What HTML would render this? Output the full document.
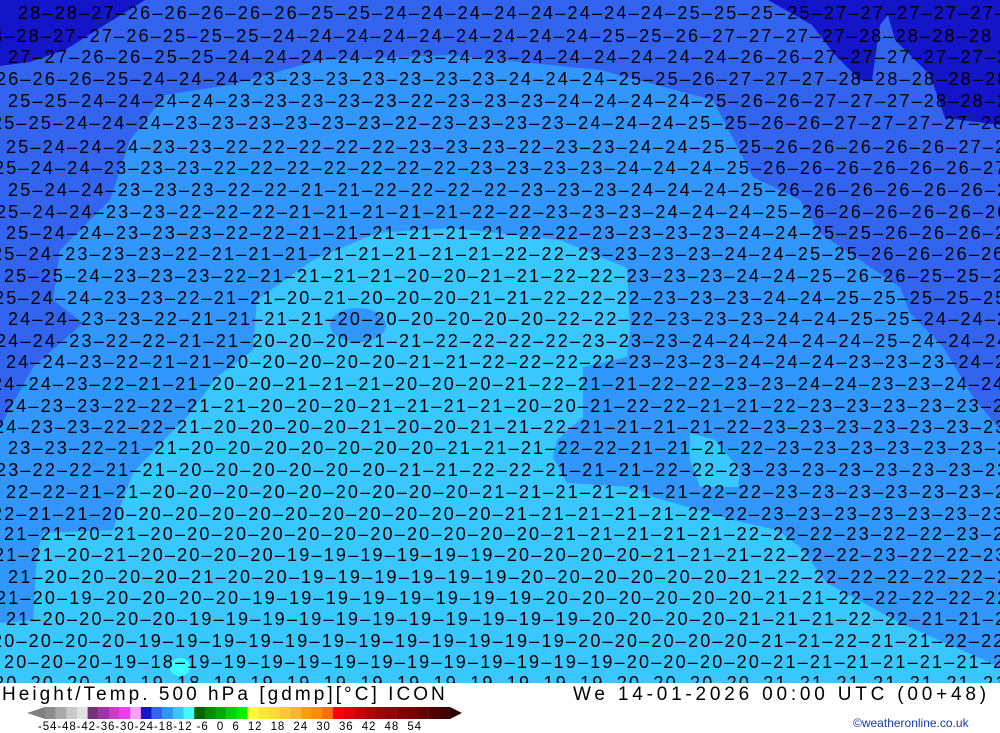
<!DOCTYPE html>
<html><head><meta charset="utf-8"><style>
html,body{margin:0;padding:0;background:#fff;}
#wrap{position:relative;width:1000px;height:733px;overflow:hidden;background:#fff;font-family:"Liberation Sans",sans-serif;}
#map{position:absolute;left:0;top:0;width:1000px;height:683px;overflow:hidden;}
.r{position:absolute;white-space:pre;font-size:18px;letter-spacing:2.2px;color:#000;line-height:18px;}
.t{position:absolute;white-space:pre;font-size:19px;color:#000;}
</style></head><body><div id="wrap">
<div id="map">
<svg width="1000" height="683" style="position:absolute;left:0;top:0">
<rect width="1000" height="683" fill="#3264f0"/>
<polygon fill="#1414c8" points="0,0 145,0 100,28 65,50 30,62 0,66"/>
<polygon fill="#1414c8" points="768,0 1000,0 1000,125 945,118 930,75 895,40 888,15 880,25 872,80 860,80 835,55 812,25"/>
<polygon fill="#3296ff" points="0,427 33,367 83,323 53,300 60,250 110,200 130,140 165,95 230,85 320,60 450,55 600,70 713,100 753,177 800,200 820,233 860,260 900,287 910,313 943,347 973,397 1000,430 1000,683 0,683"/>
<polygon fill="#38c8ff" points="0,623 33,620 37,553 43,533 113,530 120,507 133,473 157,447 187,417 217,377 253,350 257,300 313,260 377,233 450,228 560,240 627,268 630,330 627,357 583,367 583,417 557,440 553,457 567,483 633,487 653,497 733,520 777,530 800,547 827,583 900,623 1000,667 1000,683 0,683"/>
<polygon fill="#38c8ff" points="690,433 715,440 740,470 738,487 700,487 690,460"/>
<ellipse cx="358" cy="325" rx="28" ry="17" fill="#3296ff"/>
<ellipse cx="180" cy="667" rx="10" ry="9" fill="#3cffff"/>
</svg>
<div class="r" style="left:18px;top:4px">28–28–27–26–26–26–26–26–25–25–24–24–24–24–24–24–24–24–25–25–25–25–27–27–27–27–27–28–28</div>
<div class="r" style="left:-8px;top:27px">8–28–27–27–26–25–25–25–24–24–24–24–24–24–24–24–24–25–25–26–27–27–27–27–28–28–28–28</div>
<div class="r" style="left:8px;top:48px">27–27–26–26–25–25–24–24–24–24–24–23–24–23–24–24–24–24–24–24–26–26–27–27–27–27–27–28–28</div>
<div class="r" style="left:-4px;top:70px">26–26–26–25–24–24–24–23–23–23–23–23–23–23–24–24–24–25–25–26–27–27–27–28–28–28–28–28</div>
<div class="r" style="left:8px;top:92px">25–25–24–24–24–24–23–23–23–23–23–22–23–23–23–24–24–24–24–25–26–26–27–27–27–28–28–28</div>
<div class="r" style="left:-8px;top:114px">25–25–24–24–24–23–23–23–23–23–23–22–23–23–23–23–24–24–24–25–25–26–26–27–27–27–27–28–28</div>
<div class="r" style="left:6px;top:138px">25–24–24–24–23–23–22–22–22–22–22–23–23–23–22–23–23–24–24–25–25–26–26–26–26–26–27–27</div>
<div class="r" style="left:-6px;top:159px">25–24–24–23–23–23–22–22–22–22–22–22–22–23–23–23–23–24–24–24–25–26–26–26–26–26–26–27–27</div>
<div class="r" style="left:8px;top:181px">25–24–24–23–23–23–22–22–21–21–22–22–22–22–23–23–23–24–24–24–25–26–26–26–26–26–26–26</div>
<div class="r" style="left:-4px;top:203px">25–24–24–23–23–22–22–22–21–21–21–21–21–22–22–23–23–23–24–24–24–25–26–26–26–26–26–26–26</div>
<div class="r" style="left:6px;top:224px">25–24–24–23–23–23–22–22–21–21–21–21–21–21–22–22–23–23–23–23–24–24–25–25–26–26–26–26</div>
<div class="r" style="left:-8px;top:245px">25–24–23–23–23–22–21–21–21–21–21–21–21–21–22–22–23–23–23–23–24–24–25–25–26–26–26–26–26</div>
<div class="r" style="left:4px;top:267px">25–25–24–23–23–23–22–21–21–21–21–20–20–21–21–22–22–23–23–23–24–24–25–26–26–25–25–26</div>
<div class="r" style="left:-6px;top:289px">25–24–24–23–23–22–21–21–20–21–20–20–20–21–21–22–22–22–23–23–23–24–24–25–25–25–25–25–25</div>
<div class="r" style="left:8px;top:310px">24–24–23–23–22–21–21–21–21–20–20–20–20–20–20–22–22–22–23–23–23–24–24–25–25–24–24–25</div>
<div class="r" style="left:-4px;top:332px">24–24–23–22–22–21–21–20–20–20–21–21–22–22–22–22–23–23–23–24–24–24–24–24–25–24–24–24–25</div>
<div class="r" style="left:6px;top:353px">24–24–23–22–21–21–20–20–20–20–20–21–21–22–22–22–22–23–23–23–24–24–24–23–23–23–24–24</div>
<div class="r" style="left:-8px;top:375px">24–24–23–22–21–21–20–20–21–21–21–20–20–20–21–22–21–21–22–22–23–23–24–24–23–23–24–24–24</div>
<div class="r" style="left:4px;top:397px">24–23–23–22–22–21–21–20–20–20–21–21–21–21–20–20–21–22–22–21–21–22–23–23–23–23–23–23</div>
<div class="r" style="left:-6px;top:418px">24–23–23–22–22–21–20–20–20–20–21–20–20–21–21–22–21–21–21–21–22–23–23–23–23–23–23–23–23</div>
<div class="r" style="left:8px;top:439px">23–23–22–21–21–20–20–20–20–20–20–20–21–21–21–22–22–21–21–21–22–23–23–23–23–23–23–23</div>
<div class="r" style="left:-4px;top:461px">23–22–22–21–21–20–20–20–20–20–20–21–21–22–22–21–21–21–22–22–23–23–23–23–23–23–23–23–23</div>
<div class="r" style="left:6px;top:483px">22–22–21–21–20–20–20–20–20–20–20–20–20–21–21–21–21–21–21–22–22–23–23–23–23–23–23–23</div>
<div class="r" style="left:-8px;top:505px">22–21–21–20–20–20–20–20–20–20–20–20–20–20–21–21–21–21–21–22–22–23–23–23–23–23–23–23–23</div>
<div class="r" style="left:4px;top:525px">21–21–20–21–20–20–20–20–20–20–20–20–20–20–20–21–21–21–21–21–22–22–22–23–22–22–23–23</div>
<div class="r" style="left:-6px;top:546px">21–21–20–21–20–20–20–20–19–19–19–19–19–19–20–20–20–20–21–21–21–22–22–22–23–22–22–23–23</div>
<div class="r" style="left:8px;top:568px">21–20–20–20–20–21–20–20–19–19–19–19–19–19–20–20–20–20–20–20–21–22–22–22–22–22–22–22</div>
<div class="r" style="left:-4px;top:589px">21–20–19–20–20–20–20–19–19–19–19–19–19–19–19–20–20–20–20–20–20–21–21–22–22–22–22–22–22</div>
<div class="r" style="left:6px;top:610px">21–20–20–20–20–19–19–19–19–19–19–19–19–19–19–19–20–20–20–20–21–21–21–22–22–21–21–22</div>
<div class="r" style="left:-8px;top:632px">20–20–20–20–19–19–19–19–19–19–19–19–19–19–19–19–20–20–20–20–20–21–21–22–21–21–22–22–22</div>
<div class="r" style="left:4px;top:653px">20–20–20–19–18–19–19–19–19–19–19–19–19–19–19–19–19–20–20–20–20–21–21–21–21–21–21–21</div>
<div class="r" style="left:-6px;top:674px">20–20–20–19–19–18–19–19–19–19–19–19–19–19–19–19–19–20–20–20–20–21–21–21–21–21–21–21–21</div>
</div>
<div class="t" style="left:2px;top:684px;letter-spacing:3.05px">Height/Temp. 500 hPa [gdmp][°C] ICON</div>
<div class="t" style="left:573px;top:684px;letter-spacing:3.8px">We 14-01-2026 00:00 UTC (00+48)</div>
<svg width="470" height="20" style="position:absolute;left:0;top:705px">
<polygon points="27,8 45,2 45,14" fill="#808080"/>
<rect x="45.0" y="2" width="10.8" height="12" fill="#8c8c8c"/><rect x="55.7" y="2" width="10.8" height="12" fill="#aaaaaa"/><rect x="66.3" y="2" width="10.8" height="12" fill="#c8c8c8"/><rect x="77.0" y="2" width="10.8" height="12" fill="#e1e1e1"/><rect x="87.6" y="2" width="10.8" height="12" fill="#783278"/><rect x="98.3" y="2" width="10.8" height="12" fill="#a032aa"/><rect x="108.9" y="2" width="10.8" height="12" fill="#c83cc8"/><rect x="119.6" y="2" width="10.8" height="12" fill="#f03cf0"/><rect x="130.3" y="2" width="10.8" height="12" fill="#ffa0ff"/><rect x="140.9" y="2" width="10.8" height="12" fill="#1414c8"/><rect x="151.6" y="2" width="10.8" height="12" fill="#3264f0"/><rect x="162.2" y="2" width="10.8" height="12" fill="#3296ff"/><rect x="172.9" y="2" width="10.8" height="12" fill="#38c8ff"/><rect x="183.5" y="2" width="10.8" height="12" fill="#3cffff"/><rect x="194.2" y="2" width="10.8" height="12" fill="#006400"/><rect x="204.9" y="2" width="10.8" height="12" fill="#008c00"/><rect x="215.5" y="2" width="10.8" height="12" fill="#00aa00"/><rect x="226.2" y="2" width="10.8" height="12" fill="#00d200"/><rect x="236.8" y="2" width="10.8" height="12" fill="#00f000"/><rect x="247.5" y="2" width="10.8" height="12" fill="#ffff32"/><rect x="258.2" y="2" width="10.8" height="12" fill="#ffe632"/><rect x="268.8" y="2" width="10.8" height="12" fill="#ffdc32"/><rect x="279.5" y="2" width="10.8" height="12" fill="#ffc832"/><rect x="290.1" y="2" width="10.8" height="12" fill="#ffb432"/><rect x="300.8" y="2" width="10.8" height="12" fill="#ffa000"/><rect x="311.4" y="2" width="10.8" height="12" fill="#ff8c00"/><rect x="322.1" y="2" width="10.8" height="12" fill="#ff6e00"/><rect x="332.8" y="2" width="10.8" height="12" fill="#ff0000"/><rect x="343.4" y="2" width="10.8" height="12" fill="#e60000"/><rect x="354.1" y="2" width="10.8" height="12" fill="#c80000"/><rect x="364.7" y="2" width="10.8" height="12" fill="#b40000"/><rect x="375.4" y="2" width="10.8" height="12" fill="#a00000"/><rect x="386.0" y="2" width="10.8" height="12" fill="#960000"/><rect x="396.7" y="2" width="10.8" height="12" fill="#820000"/><rect x="407.4" y="2" width="10.8" height="12" fill="#780000"/><rect x="418.0" y="2" width="10.8" height="12" fill="#640000"/><rect x="428.7" y="2" width="10.8" height="12" fill="#500000"/><rect x="439.3" y="2" width="10.7" height="12" fill="#400000"/>
<polygon points="450,2 462,8 450,14" fill="#2a0000"/>
</svg>
<div style="position:absolute;left:38px;top:721px;font-size:11.5px;letter-spacing:0.9px;white-space:pre;color:#000">-54-48-42-36-30-24-18-12 -6  0  6  12  18  24  30  36  42  48  54</div>
<div style="position:absolute;left:853px;top:716px;font-size:12px;color:#1a3aa8;white-space:pre">©weatheronline.co.uk</div>
</div></body></html>
